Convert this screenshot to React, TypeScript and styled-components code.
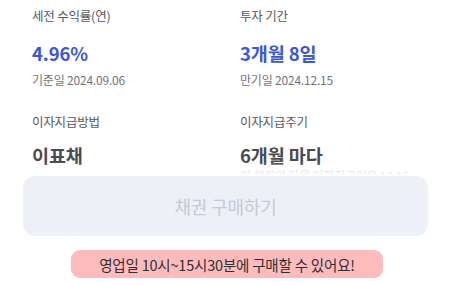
import styled, { createGlobalStyle } from 'styled-components';

const GlobalStyle = createGlobalStyle`
  html, body {
    margin: 0;
    padding: 0;
    background: #ffffff;
  }
  body {
    font-family: "Noto Sans CJK KR", "Noto Sans", sans-serif;
    -webkit-font-smoothing: antialiased;
  }
`;

const Page = styled.div`
  position: relative;
  width: 450px;
  height: 285px;
  overflow: hidden;
  background: #ffffff;
`;

const InfoGrid = styled.div`
  display: grid;
  grid-template-columns: 208px 1fr;
  row-gap: 25px;
  padding: 7px 32px 0;
`;

const InfoItem = styled.div`
  display: flex;
  flex-direction: column;
`;

const Label = styled.div`
  font-size: 12.5px;
  line-height: 18px;
  color: #555861;
  letter-spacing: -0.2px;
`;

const Value = styled.div<{ $accent?: boolean; $gap: number }>`
  margin-top: ${({ $gap }) => $gap}px;
  font-size: 18.5px;
  line-height: 26px;
  font-weight: 700;
  letter-spacing: -0.1px;
  color: ${({ $accent }) => ($accent ? '#3c57d6' : '#4a4b51')};
`;

const SubText = styled.div<{ $faint?: boolean }>`
  margin-top: ${({ $faint }) => ($faint ? 1 : 6)}px;
  font-size: 12px;
  line-height: ${({ $faint }) => ($faint ? 14 : 16)}px;
  color: ${({ $faint }) => ($faint ? '#b9bbc2' : '#72757c')};
  letter-spacing: -0.2px;
`;

const BottomArea = styled.div`
  position: absolute;
  left: 0;
  right: 0;
  bottom: 0;
  padding-top: 14px;
  display: flex;
  flex-direction: column;
  align-items: center;
  background: linear-gradient(
    to bottom,
    rgba(255, 255, 255, 0) 0px,
    rgba(255, 255, 255, 0.55) 9px,
    #ffffff 14px
  );
`;

const BuyButton = styled.button`
  width: 405px;
  height: 60px;
  margin-left: 1px;
  border: none;
  border-radius: 12px;
  background: #eef0f8;
  color: #c6c9d4;
  font-family: inherit;
  font-size: 18px;
  letter-spacing: -0.2px;
  cursor: not-allowed;
`;

const Notice = styled.div`
  margin: 14px 0 7px 4px;
  height: 28px;
  padding: 0 28px;
  display: flex;
  align-items: center;
  border-radius: 9px;
  background: #ffbcbc;
  color: #2f2f33;
  font-size: 14.5px;
  letter-spacing: -0.2px;
`;

export default function App() {
  return (
    <>
      <GlobalStyle />
      <Page>
        <InfoGrid>
          <InfoItem>
            <Label>세전 수익률(연)</Label>
            <Value $accent $gap={15}>4.96%</Value>
            <SubText>기준일 2024.09.06</SubText>
          </InfoItem>
          <InfoItem>
            <Label>투자 기간</Label>
            <Value $accent $gap={15}>3개월 8일</Value>
            <SubText>만기일 2024.12.15</SubText>
          </InfoItem>
          <InfoItem>
            <Label>이자지급방법</Label>
            <Value $gap={11}>이표채</Value>
          </InfoItem>
          <InfoItem>
            <Label>이자지급주기</Label>
            <Value $gap={11}>6개월 마다</Value>
            <SubText $faint>이 채권의 다음 이자지급일은 12.15</SubText>
          </InfoItem>
        </InfoGrid>
        <BottomArea>
          <BuyButton disabled>채권 구매하기</BuyButton>
          <Notice>영업일 10시~15시30분에 구매할 수 있어요!</Notice>
        </BottomArea>
      </Page>
    </>
  );
}
